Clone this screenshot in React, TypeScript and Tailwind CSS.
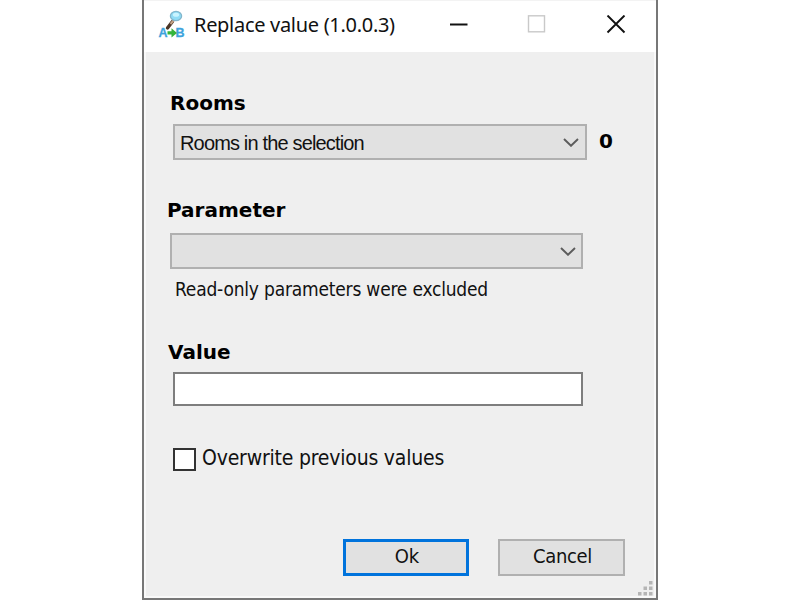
import type { ReactNode } from 'react';

const tahoma = "font-['DejaVu_Sans_Condensed','DejaVu_Sans',sans-serif] [font-stretch:condensed]";

function AppIcon() {
  return (
    <svg className="h-[30px] w-[28px] shrink-0" viewBox="0 0 28 30">
      <path d="M14.500 12.500 L9.500 19" stroke="#4b3527" strokeWidth="3.4" strokeLinecap="round" />
      <path d="M15.500 11.500 L12.500 15" stroke="#c3a184" strokeWidth="2" />
      <ellipse cx="18" cy="7" rx="5.600" ry="4.700" fill="#8fdcf6" stroke="#82b6cc" strokeWidth="1.3" />
      <ellipse cx="18" cy="5.800" rx="3.200" ry="2" fill="#c9f4ff" />
      <text x="0.500" y="28" fontFamily="Liberation Sans, sans-serif" fontSize="12.500" fontWeight="700" fill="#3da3dc" stroke="#3da3dc" strokeWidth="0.300">A</text>
      <text x="17.500" y="28" fontFamily="Liberation Sans, sans-serif" fontSize="12.500" fontWeight="700" fill="#3da3dc" stroke="#3da3dc" strokeWidth="0.300">B</text>
      <path d="M9.500 22.200h4v-3l5.500 4.800-5.500 4.500v-3h-4z" fill="#35b43b" />
    </svg>
  );
}

function Chevron() {
  return (
    <svg className="h-[10px] w-[16px]" viewBox="0 0 16 10" fill="none">
      <path d="M1 2 L8 8.800 L15 2" stroke="#5c5c5c" strokeWidth="1.9" />
    </svg>
  );
}

function Heading({ children, className }: { children: ReactNode; className: string }) {
  return <h2 className={`h-[26px] whitespace-nowrap font-['DejaVu_Sans',sans-serif] text-[20px] leading-[26px] font-bold text-black ${className}`}>{children}</h2>;
}

function Combo({ value, className }: { value?: string; className: string }) {
  return (
    <button className={`flex h-[36px] items-center justify-between border-2 border-[#b0b0b0] bg-[#e1e1e1] pl-[5px] ${className}`}>
      <span className="mt-[2px] whitespace-nowrap font-['Liberation_Sans',sans-serif] text-[20px] leading-[28px] tracking-[-0.84px] text-[#111]">{value}</span>
      <Chevron />
    </button>
  );
}

export default function App() {
  return (
    <div className="flex h-[600px] w-[800px] justify-center overflow-hidden bg-white">
      <main className="flex h-[600px] w-[516px] flex-col border-x-2 border-b-2 border-[#777]">
        <header className="flex h-[52px] shrink-0 items-start border-t border-[#f3f3f3] bg-white pl-[14px]">
          <div className="mt-[8px]"><AppIcon /></div>
          <h1 className="mt-[9px] ml-[8px] w-[254px] whitespace-nowrap font-['Noto_Sans',sans-serif] text-[20px] leading-[30px] tracking-[-0.3px] text-[#111]">Replace value (1.0.0.3)</h1>
          <svg className="mt-[14px] h-[20px] w-[178px]" viewBox="0 0 178 20" fill="none">
            <path d="M2 9.5H19.500" stroke="#111" strokeWidth="2" />
            <rect x="80.500" y="0.800" width="16" height="16" stroke="#c9c9c9" strokeWidth="1.4" />
            <path d="M159.500 0.500L176.500 17.500M176.500 0.500L159.500 17.500" stroke="#111" strokeWidth="1.9" />
          </svg>
        </header>

        <section className="flex flex-1 flex-col border-x-2 border-b-2 border-[#f9f9f9] bg-[#efefef]">
          <Heading className="mt-[38px] ml-[24px]">Rooms</Heading>
          <div className="mt-[8px] ml-[27px] flex h-[36px] shrink-0 items-center">
            <Combo value="Rooms in the selection" className="w-[414px] pr-[6px]" />
            <span className="ml-[12px] pb-[3px] font-['DejaVu_Sans',sans-serif] text-[20px] leading-[26px] font-bold text-black">0</span>
          </div>

          <Heading className="mt-[37px] ml-[21px]">Parameter</Heading>
          <Combo className="mt-[10px] ml-[24px] w-[413px] shrink-0 pr-[5px]" />
          <p className={`${tahoma} mt-[7px] ml-[29px] h-[26px] whitespace-nowrap text-[19px] leading-[26px] tracking-[-0.2px] text-[#111]`}>Read-only parameters were excluded</p>

          <Heading className="mt-[37px] ml-[22px]">Value</Heading>
          <input className="mt-[7px] ml-[27px] h-[34px] w-[410px] shrink-0 border-2 border-[#7e7e7e] bg-white outline-none" />

          <label className="mt-[37px] ml-[27px] flex h-[30px] shrink-0 items-center">
            <span className="mt-[2px] h-[23px] w-[23px] border-2 border-[#333] bg-white" />
            <span className={`${tahoma} ml-[6px] whitespace-nowrap text-[21px] leading-[28px] tracking-[-0.2px] text-[#111]`}>Overwrite previous values</span>
          </label>

          <footer className="mt-[66px] ml-[197px] flex shrink-0 gap-[29px]">
            <button className={`${tahoma} h-[37px] w-[126px] border-[3px] border-[#0073dc] bg-[#e1e1e1] pb-[3px] pl-[2px] text-[20px] leading-[28px] text-[#111]`}>Ok</button>
            <button className={`${tahoma} h-[37px] w-[127px] border-2 border-[#b0b0b0] bg-[#e1e1e1] pb-[3px] pl-[2px] text-[20px] leading-[30px] tracking-[-0.3px] text-[#111]`}>Cancel</button>
          </footer>
          <svg className="mt-[4px] mr-[1px] h-[16px] w-[16px] shrink-0 self-end" viewBox="0 0 16 16" fill="#b5b5b5">
            <rect x="12" y="1" width="3.500" height="3.500" />
            <rect x="6.500" y="6.500" width="3.500" height="3.500" />
            <rect x="12" y="6.500" width="3.500" height="3.500" />
            <rect x="1" y="12" width="3.500" height="3.500" />
            <rect x="6.500" y="12" width="3.500" height="3.500" />
            <rect x="12" y="12" width="3.500" height="3.500" />
          </svg>
        </section>
      </main>
    </div>
  );
}
